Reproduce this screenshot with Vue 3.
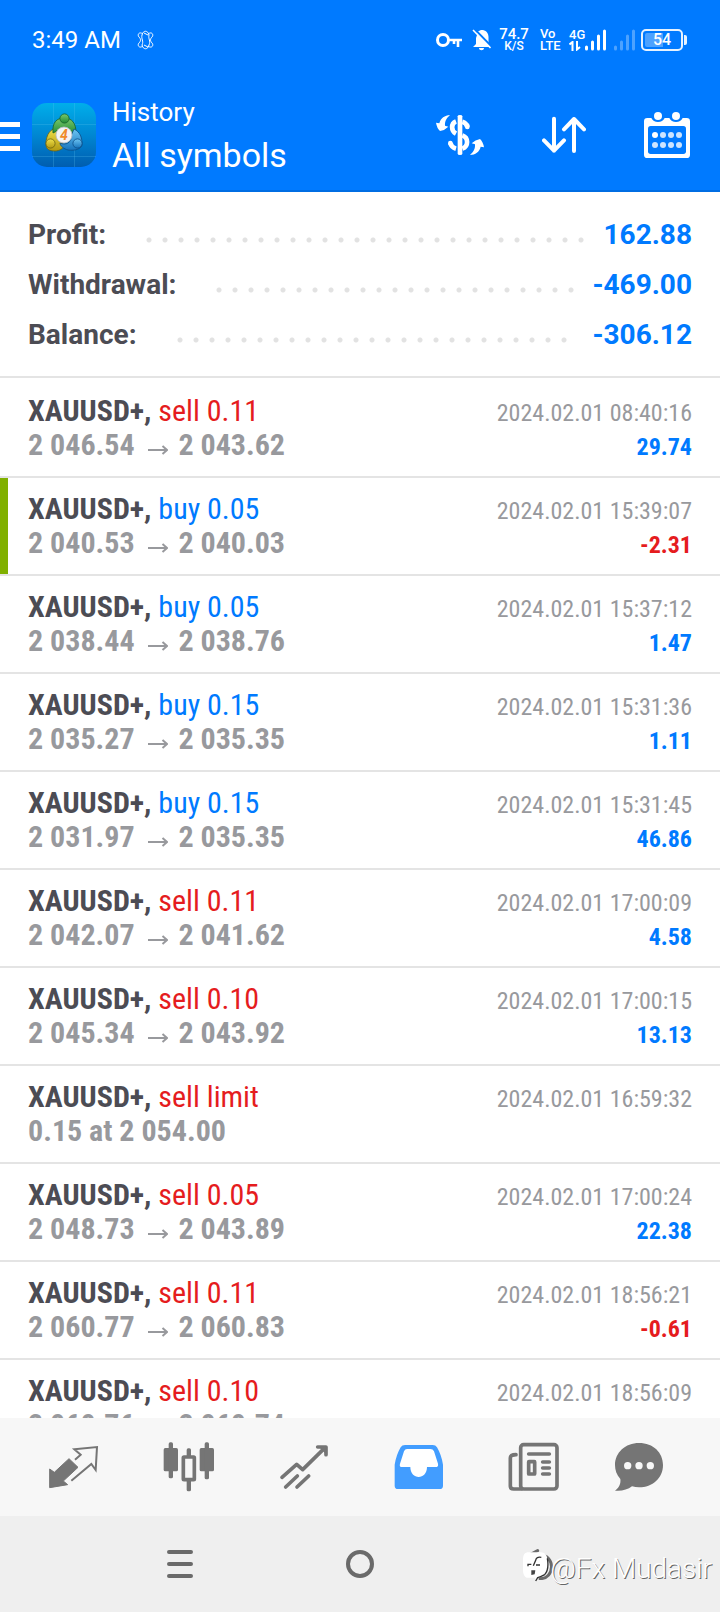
<script setup>
const summary = [
  { label: 'Profit:', value: '162.88' },
  { label: 'Withdrawal:', value: '-469.00' },
  { label: 'Balance:', value: '-306.12' },
]

const deals = [
  { side: 'sell', volume: '0.11', from: '2 046.54', to: '2 043.62', time: '2024.02.01 08:40:16', profit: '29.74' },
  { side: 'buy', volume: '0.05', from: '2 040.53', to: '2 040.03', time: '2024.02.01 15:39:07', profit: '-2.31', marked: true },
  { side: 'buy', volume: '0.05', from: '2 038.44', to: '2 038.76', time: '2024.02.01 15:37:12', profit: '1.47' },
  { side: 'buy', volume: '0.15', from: '2 035.27', to: '2 035.35', time: '2024.02.01 15:31:36', profit: '1.11' },
  { side: 'buy', volume: '0.15', from: '2 031.97', to: '2 035.35', time: '2024.02.01 15:31:45', profit: '46.86' },
  { side: 'sell', volume: '0.11', from: '2 042.07', to: '2 041.62', time: '2024.02.01 17:00:09', profit: '4.58' },
  { side: 'sell', volume: '0.10', from: '2 045.34', to: '2 043.92', time: '2024.02.01 17:00:15', profit: '13.13' },
  { side: 'sell', volume: 'limit', order: '0.15 at 2 054.00', time: '2024.02.01 16:59:32', profit: '' },
  { side: 'sell', volume: '0.05', from: '2 048.73', to: '2 043.89', time: '2024.02.01 17:00:24', profit: '22.38' },
  { side: 'sell', volume: '0.11', from: '2 060.77', to: '2 060.83', time: '2024.02.01 18:56:21', profit: '-0.61' },
  { side: 'sell', volume: '0.10', from: '2 060.76', to: '2 060.74', time: '2024.02.01 18:56:09', profit: '0.18' },
]
</script>

<template>
  <div class="app">
    <header class="header">
      <div class="status">
        <span class="clock">3:49 AM</span>
        <svg class="flower" width="18" height="20" viewBox="0 0 18 20" fill="none" stroke="#fff" stroke-width="1">
          <path d="M6 4 C2 1 0 5 2 7 C4 9 4 11 2 13 C0 15 2 19 6 16 M11 4 C15 1 17 5 15 7 C13 9 13 11 15 13 C17 15 15 19 11 16 M5 5 C6 0 11 0 12 5 M5 15 C6 20 11 20 12 15 M5 5 C4 9 7 11 5 15 M12 5 C11 9 14 11 12 15 M7 3 L11 5 M11 17 L7 15" />
        </svg>
        <div class="tray">
          <svg class="key" width="26" height="16" viewBox="0 0 26 16" fill="none" stroke="#fff" stroke-width="3">
            <circle cx="7" cy="8" r="5.5" />
            <path d="M12 8 H26 M22 8 V15 M18 8 V12" stroke-width="2.6" />
          </svg>
          <svg class="bell" width="20" height="22" viewBox="0 0 20 22">
            <path d="M5 3 L9 1 H11 C15 2 16.500 5 16.500 8 V14 L19 18 H1 L4 15 V9 L5 6 Z M7 19 H12 C12 22 7 22 7 19 Z" fill="#fff" />
            <path d="M2.500 0 L20 18" stroke="#007aff" stroke-width="2" />
            <path d="M1 1 L18.500 19" stroke="#fff" stroke-width="1.600" />
          </svg>
          <span class="tiny speed"><b>74.7</b><small>K/S</small></span>
          <span class="tiny lte"><span>Vo</span><span>LTE</span></span>
          <span class="tiny net">
            <span>4G</span>
            <svg width="12" height="10" viewBox="0 0 12 10" fill="none" stroke="#fff" stroke-width="2">
              <path d="M3.500 10 V1 L0.500 3.500 M8 0 V8.500 L11 6" />
            </svg>
          </span>
          <svg class="bars" width="21" height="22" viewBox="0 0 21 22" stroke="#fff" stroke-width="3" stroke-linecap="round">
            <path d="M1.500 18 V20 M7.500 13 V20 M13.500 7 V20 M19.500 2 V20" />
          </svg>
          <svg class="bars second" width="21" height="22" viewBox="0 0 21 22" stroke="#4da2ff" stroke-width="3" stroke-linecap="round">
            <path d="M1.500 18 V20 M7.500 13 V20 M13.500 7 V20 M19.500 2 V20" />
          </svg>
          <span class="battery"><span class="charge">54</span></span>
        </div>
      </div>

      <div class="bar">
        <button class="menu" aria-label="Menu">
          <svg width="20" height="32" viewBox="0 0 20 32" fill="#fff">
            <path d="M0 3 H20 V8 H0 Z M0 15 H20 V20 H0 Z M0 27 H20 V32 H0 Z" />
          </svg>
        </button>
        <svg class="logo" width="64" height="64" viewBox="0 0 64 64">
          <defs>
            <linearGradient id="sky" x1="0" y1="0" x2="0" y2="1">
              <stop offset="0" stop-color="#00aeea" />
              <stop offset="0.500" stop-color="#0087d2" />
              <stop offset="1" stop-color="#005db0" />
            </linearGradient>
            <linearGradient id="leaf" x1="0" y1="0" x2="0" y2="1">
              <stop offset="0" stop-color="#7cc96c" />
              <stop offset="1" stop-color="#1f8a34" />
            </linearGradient>
            <linearGradient id="gold" x1="0" y1="0" x2="0" y2="1">
              <stop offset="0" stop-color="#efe04a" />
              <stop offset="1" stop-color="#b39a12" />
            </linearGradient>
            <linearGradient id="sea" x1="0" y1="0" x2="0" y2="1">
              <stop offset="0" stop-color="#6cc4f2" />
              <stop offset="1" stop-color="#1674bd" />
            </linearGradient>
          </defs>
          <rect width="64" height="64" rx="15" fill="url(#sky)" />
          <path d="M21.500 0 V64 M42.500 0 V64 M0 21.500 H64 M0 53.500 H64" stroke="#5cc4f0" stroke-opacity="0.250" />
          <g stroke-width="0.800">
            <path d="M14 41 C14 31 19 25 26 25 C28 28 25 35 30 40 C35 43 29 48 23 48 C17 48 14 46 14 41 Z" fill="url(#gold)" stroke="#6c6212" />
            <path d="M21 30 C20 19 25 15 32 15 C40 15 44 20 44 30 L38 31 C37 25 27 24 25 28 Z" fill="url(#leaf)" stroke="#14602a" />
            <path d="M42 26 C48 29 50 34 50 41 C50 46 43 48 36 47 C32 46 28 43 28 40 C34 43 40 39 39 33 Z" fill="url(#sea)" stroke="#0b4d87" />
            <circle cx="32.500" cy="15.500" r="4.600" fill="url(#leaf)" stroke="#14602a" />
            <circle cx="18.500" cy="40.500" r="4.600" fill="url(#gold)" stroke="#6c6212" />
            <circle cx="45.500" cy="40.500" r="4.600" fill="url(#sea)" stroke="#0b4d87" />
            <circle cx="32" cy="32" r="8" fill="#f3f3f5" stroke="#b9bcc4" />
          </g>
          <text class="logo-num" x="32" y="37" text-anchor="middle">4</text>
        </svg>
        <div class="titles">
          <span class="crumb">History</span>
          <h1>All symbols</h1>
        </div>
        <nav class="actions" aria-label="History tools">
          <button aria-label="Symbols">
            <svg width="48" height="42" viewBox="228 345 144 126" fill="none" stroke="#fff" stroke-width="14">
              <path d="M293 352 Q293 348 300 348 Q307 348 307 352 V464 Q307 468 300 468 Q293 468 293 464 Z" fill="#fff" stroke="none" />
              <path d="M288 367 C272 373 273 396 288 404 M307 368 Q319 371 322 384 M307 409 C326 416 326 442 307 449 M288 449 Q274 445 271 432" />
              <path d="M322 380 V384 M271 432 V433" stroke-linecap="round" />
              <path d="M270 348 C254 349 242 357 238 373 L228 371 Q231 388 240 396 Q254 394 265 383 L255 380 C254 366 260 357 270 348 Z M330 468 C346 467 358 459 362 443 L372 445 Q369 428 360 420 Q346 422 335 433 L345 436 C346 450 340 459 330 468 Z" fill="#fff" stroke="none" />
            </svg>
          </button>
          <button aria-label="Sort">
            <svg width="44" height="38" viewBox="546 351 132 114" fill="none" stroke="#fff" stroke-width="12" stroke-linecap="round" stroke-linejoin="round">
              <path d="M582 359 V455 M552 424 L582 455 L612 424 M642 456 V360 M612 391 L642 360 L672 391" />
            </svg>
          </button>
          <button aria-label="Period">
            <svg width="46" height="46" viewBox="852 336 138 138">
              <path d="M862 354 H874 Q880 366 894 366 Q908 366 914 354 H928 Q934 366 948 366 Q962 366 968 354 H980 Q990 354 990 364 V464 Q990 474 980 474 H862 Q852 474 852 464 V364 Q852 354 862 354 Z" fill="#fff" />
              <rect x="864" y="378" width="114" height="84" rx="8" fill="#007aff" />
              <g fill="#fff">
                <circle cx="894" cy="348" r="12" />
                <circle cx="948" cy="348" r="12" />
                <circle cx="885" cy="405" r="9" />
              </g>
              <g fill="#cce4ff">
                <circle cx="909" cy="405" r="9" />
                <circle cx="933" cy="405" r="9" />
                <circle cx="957" cy="405" r="9" />
                <circle cx="885" cy="435" r="9" />
                <circle cx="909" cy="435" r="9" />
                <circle cx="933" cy="435" r="9" />
                <circle cx="957" cy="435" r="9" />
              </g>
            </svg>
          </button>
        </nav>
      </div>
    </header>

    <dl class="summary">
      <div v-for="s in summary" :key="s.label" class="total">
        <dt>{{ s.label }}</dt>
        <dd><span class="dots"></span><span>{{ s.value }}</span></dd>
      </div>
    </dl>

    <ul class="deals">
      <li v-for="d in deals" :key="d.time" class="deal" :class="{ marked: d.marked }">
        <div class="line">
          <span class="symbol">XAUUSD+, <span :class="d.side">{{ d.side }} {{ d.volume }}</span></span>
          <time>{{ d.time }}</time>
        </div>
        <div class="line">
          <span v-if="d.order" class="price">{{ d.order }}</span>
          <span v-else class="price">{{ d.from }}
            <svg class="arrow" width="20" height="10" viewBox="0 0 20 10" fill="none" stroke="#98999d" stroke-width="2" role="img" aria-label="to">
              <path d="M0 5 H19 M14.500 1 L19 5 L14.500 9" />
            </svg>
            {{ d.to }}</span>
          <span class="result" :class="{ loss: d.profit.startsWith('-') }">{{ d.profit }}</span>
        </div>
      </li>
    </ul>

    <nav class="tabs" aria-label="Sections">
      <button aria-label="Quotes">
        <svg width="50" height="44" viewBox="147 255 150 132">
          <path d="M149 327 L163 337 L207 296 L234 322 L190 363 L203 374 L149 383 Z" fill="#757575" stroke="#757575" stroke-width="3" stroke-linejoin="round" />
          <path d="M225 299 L242 284 L223 268 L291 261 L287 330 L274 312 L214 362" fill="none" stroke="#757575" stroke-width="6" />
        </svg>
      </button>
      <button aria-label="Charts">
        <svg width="52" height="50" viewBox="488 245 156 150" fill="#757575">
          <rect x="490" y="263" width="43" height="70" rx="5" />
          <rect x="598" y="263" width="43" height="70" rx="5" />
          <rect x="505" y="246" width="13" height="108" rx="5" />
          <rect x="613" y="246" width="13" height="111" rx="5" />
          <rect x="559" y="264" width="13" height="129" rx="5" />
          <rect x="549" y="290" width="33" height="68" rx="2" fill="#f7f7f7" stroke="#757575" stroke-width="11" />
        </svg>
      </button>
      <button aria-label="Trade">
        <svg width="50" height="46" viewBox="834 249 150 138" fill="none" stroke="#757575" stroke-width="11" stroke-linecap="round" stroke-linejoin="round">
          <path d="M843 349 L887 310 L905 326 L973 259 M950 258 H975 V281 M854 378 L889 345 M888 378 L923 345" />
          <path d="M956 258 L975 278 V258 Z" fill="#757575" stroke-width="3" />
        </svg>
      </button>
      <button aria-label="History" aria-current="page">
        <svg width="50" height="46" viewBox="101 249 150 138">
          <path d="M134 252 H217 Q226 252 230 259 Q243 281 248 311 V374 Q248 384 238 384 H113 Q103 384 103 374 V311 Q108 281 121 259 Q125 252 134 252 Z" fill="#429dff" />
          <path d="M140 264 H210 Q218 264 221 271 L233 308 Q235 318 226 318 H200 C200 358 150 358 150 318 H125 Q116 318 119 308 L131 271 Q134 264 140 264 Z" fill="#fff" />
        </svg>
      </button>
      <button aria-label="News">
        <svg width="52" height="50" viewBox="443 243 156 150" fill="none" stroke="#757575" stroke-width="11">
          <rect x="481" y="251" width="109" height="133" rx="9" />
          <path d="M467 281 Q450 281 450 291 V376 Q450 384 460 384 H484 M505 279 H567 M547 303 H567 M547 321 H567 M547 339 H567" stroke-linecap="round" />
          <rect x="505" y="302" width="18" height="37" rx="1" />
        </svg>
      </button>
      <button aria-label="Messages">
        <svg width="50" height="50" viewBox="762 243 150 150">
          <path d="M837 246 C880 246 909 275 909 312 C909 351 878 379 837 379 C830 379 823 378 816 376 C803 386 785 391 765 389 C777 380 783 369 781 354 C770 342 765 327 765 312 C765 275 796 246 837 246 Z" fill="#757575" />
          <g fill="#f7f7f7">
            <circle cx="803" cy="314" r="11" />
            <circle cx="837" cy="314" r="11" />
            <circle cx="871" cy="314" r="11" />
          </g>
        </svg>
      </button>
    </nav>

    <nav class="system" aria-label="System">
      <button aria-label="Recent apps">
        <svg width="26" height="28" viewBox="0 0 26 28" stroke="#6a6a6a" stroke-width="4" stroke-linecap="round">
          <path d="M2 2 H24 M2 14 H24 M2 26 H24" />
        </svg>
      </button>
      <button aria-label="Home">
        <svg width="28" height="28" viewBox="0 0 28 28" fill="none" stroke="#6a6a6a" stroke-width="4">
          <circle cx="14" cy="14" r="12" />
        </svg>
      </button>
      <button aria-label="Back">
        <svg width="28" height="32" viewBox="498 566 84 96" fill="none" stroke="#6a6a6a" stroke-width="9" stroke-linecap="round" stroke-linejoin="round">
          <path d="M533 574 L508 587 H540 C586 587 586 658 540 658" />
        </svg>
      </button>
    </nav>

    <div class="credit">
      <svg width="28" height="36" viewBox="498 584 84 108">
        <path d="M514 588 H556 Q574 590 574 612 V640 Q573 657 556 660 L545 664 L540 673 L537 664 H512 Q502 660 501 644 V606 Q502 590 514 588 Z" fill="#fff" />
        <path d="M574 606 Q580 640 566 655 Q552 662 545 664 L539 674 M556 603 Q541 600 539 612 L532 628 M516 630 V624 H526 M540 626 H552" fill="none" stroke="#333" stroke-width="4" />
        <path d="M526 642 H538 L536 654 L526 656 Z" fill="#444" />
      </svg>
      <span>@Fx Mudasir</span>
    </div>
  </div>
</template>

<style>
body {
  margin: 0;
}
</style>

<style scoped>
.app {
  position: relative;
  display: flex;
  flex-direction: column;
  height: 100vh;
  background: #fff;
  color: #4c4c54;
  font-family: Roboto, 'Liberation Sans', sans-serif;
}
button {
  display: flex;
  align-items: center;
  justify-content: center;
  padding: 0;
  border: 0;
  background: none;
}
svg {
  display: block;
  flex: none;
}
.header {
  flex: none;
  background: #007aff;
  border-bottom: 2px solid #006de3;
  color: #fff;
}
.status {
  display: flex;
  align-items: center;
  height: 80px;
  padding: 0 33px 0 32px;
}
.clock {
  font-size: 24px;
  line-height: 28px;
}
.flower {
  margin-left: 16px;
}
.tray {
  display: flex;
  align-items: center;
  margin-left: auto;
}
.bell {
  margin-left: 10px;
}
.tiny {
  display: flex;
  flex-direction: column;
  align-items: flex-start;
  font-size: 13px;
  font-weight: 500;
  line-height: 12px;
}
.speed {
  align-items: center;
  width: 28px;
  margin-left: 8px;
}
.speed b {
  font-size: 15px;
  font-weight: 500;
}
.speed small {
  font-size: 12px;
}
.lte {
  width: 20px;
  margin-left: 12px;
}
.net {
  width: 16px;
  margin-left: 9px;
}
.second {
  margin-left: 8px;
}
.battery {
  position: relative;
  box-sizing: border-box;
  width: 42px;
  height: 22px;
  margin: 0 4px 0 6px;
  padding: 2px;
  border: 2px solid #e6f2ff;
  border-radius: 5px;
}
.battery::after {
  content: '';
  position: absolute;
  top: 4px;
  right: -6px;
  width: 3px;
  height: 10px;
  border-radius: 0 2px 2px 0;
  background: #e6f2ff;
}
.charge {
  display: block;
  border-radius: 2px;
  background: linear-gradient(90deg, #4da2ff 54%, transparent 54%);
  font-size: 16px;
  font-weight: 500;
  line-height: 14px;
  text-align: center;
}
.bar {
  display: flex;
  align-items: center;
  height: 110px;
  padding-right: 30px;
}
.logo {
  margin-left: 12px;
}
.logo-num {
  fill: #f08a2c;
  font-size: 14px;
  font-weight: 700;
  font-style: italic;
}
.titles {
  margin-left: 16px;
}
.crumb {
  display: block;
  font-size: 26px;
  line-height: 40px;
}
h1 {
  margin: 0;
  font-size: 34px;
  font-weight: 400;
  line-height: 46px;
}
.actions {
  display: flex;
  align-items: center;
  gap: 58px;
  margin-left: auto;
}
.summary {
  flex: none;
  margin: 0;
  padding: 18px 28px 16px;
  border-bottom: 2px solid #e4e4e4;
  font-size: 28px;
  font-weight: 700;
  line-height: 50px;
}
.total,
.total dd {
  display: flex;
}
.total dd {
  flex: 1;
  margin: 0;
  color: #007aff;
}
.dots {
  flex: 1;
  height: 6px;
  margin: 27px 18px 0 31px;
  background: radial-gradient(circle at 12px 3px, #e2e2e2 2px, transparent 3px) 0 0 / 16px 6px repeat-x;
}
.deals {
  flex: 1;
  min-height: 0;
  margin: 0;
  padding: 0;
  overflow: hidden;
  list-style: none;
  font-family: 'Roboto Condensed', 'Liberation Sans Narrow', Roboto, sans-serif;
}
.deal {
  padding: 14px 28px;
  border-top: 2px solid #e4e4e4;
}
.deal:first-child {
  border-top-color: transparent;
}
.marked {
  background: linear-gradient(90deg, #80b000 8px, transparent 8px) padding-box;
}
.line {
  display: flex;
  align-items: baseline;
  justify-content: space-between;
  height: 34px;
  line-height: 34px;
  white-space: nowrap;
}
.symbol,
.price {
  font-size: 30px;
  font-weight: 700;
}
.price,
time {
  color: #98999d;
}
.symbol span {
  font-weight: 400;
}
.symbol .sell,
.result.loss {
  color: #e51c1e;
}
.symbol .buy,
.result {
  color: #007aff;
}
time,
.result {
  font-size: 24px;
}
.result {
  font-weight: 700;
}
.arrow {
  display: inline-block;
  margin: 0 4px 0 6px;
}
.tabs {
  display: grid;
  flex: none;
  grid-template-columns: repeat(5, 115fr) 96fr;
  height: 98px;
  padding: 0 33px 0 16px;
  background: #f7f7f7;
}
.system {
  display: grid;
  flex: none;
  grid-template-columns: repeat(3, 1fr);
  height: 96px;
  padding: 0 90px;
  background: #efefef;
}
.credit {
  position: absolute;
  right: 8px;
  bottom: 25px;
  display: flex;
  align-items: center;
  color: #fff;
  font-size: 28px;
  font-weight: 300;
  line-height: 36px;
  text-shadow: 1px 1px 0 #666;
}
</style>
